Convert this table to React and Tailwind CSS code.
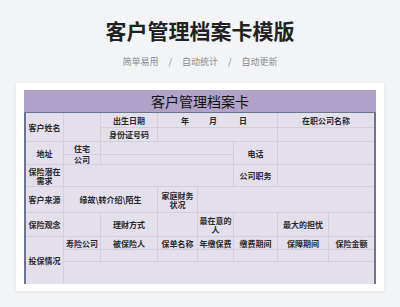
import React from 'react'

const cell = 'flex items-center justify-center text-center bg-[#e3e0ec] leading-[9px]'

export default function App() {
  return (
    <div className="min-h-screen bg-[#f3f4f6] font-['Noto_Sans_CJK_SC','Noto_Sans',sans-serif]">
      {/* Header */}
      <div className="pt-[17px] text-center text-[21px] font-bold leading-[26px] text-[#222]">客户管理档案卡模版</div>
      <div className="mt-[13px] flex justify-center gap-[10px] text-[9px] leading-[12px] text-[#8a8a8a]">
        <span>简单易用</span>
        <span>/</span>
        <span>自动统计</span>
        <span>/</span>
        <span>自动更新</span>
      </div>

      {/* Card */}
      <div className="mx-[16px] mt-[15px] bg-white px-[8px] py-[7px] shadow-[0_1px_4px_rgba(0,0,0,0.08)]">
        <div className="flex h-[22px] items-center justify-center bg-[#b0a2c9] text-[14px] text-[#111]">客户管理档案卡</div>
        <div className="grid grid-cols-[37px_36px_56px_39px_35px_43px_50px_45px] grid-rows-[14px_13px_12px_9px_21px_25px_23px_12px_11px_22px] gap-px border-t border-l-2 border-r-2 border-[#6b7590] bg-[#d2cedd] text-[8px] font-semibold text-[#2a2a2a]">
          {/* row 1-2 */}
          <div className={`${cell} col-start-1 row-start-1 row-span-2`}>客户姓名</div>
          <div className={`${cell} col-start-2 row-start-1 row-span-2`}></div>
          <div className={`${cell} col-start-3 row-start-1`}>出生日期</div>
          <div className={`${cell} col-start-4 col-span-3 row-start-1 !justify-start pl-[23px]`}>
            <span>年</span>
            <span className="ml-[20px]">月</span>
            <span className="ml-[22px]">日</span>
          </div>
          <div className={`${cell} col-start-7 col-span-2 row-start-1`}>在职公司名称</div>
          <div className={`${cell} col-start-3 row-start-2`}>身份证号码</div>
          <div className={`${cell} col-start-4 col-span-3 row-start-2`}></div>
          <div className={`${cell} col-start-7 col-span-2 row-start-2`}></div>

          {/* row 3-4 */}
          <div className={`${cell} col-start-1 row-start-3 row-span-2`}>地址</div>
          <div className={`${cell} col-start-2 row-start-3`}>住宅</div>
          <div className={`${cell} col-start-3 col-span-3 row-start-3`}></div>
          <div className={`${cell} col-start-6 row-start-3 row-span-2`}>电话</div>
          <div className={`${cell} col-start-7 col-span-2 row-start-3 row-span-2`}></div>
          <div className={`${cell} col-start-2 row-start-4`}>公司</div>
          <div className={`${cell} col-start-3 col-span-3 row-start-4`}></div>

          {/* row 5 */}
          <div className={`${cell} col-start-1 row-start-5 px-[2px]`}>保险潜在需求</div>
          <div className={`${cell} col-start-2 col-span-4 row-start-5`}></div>
          <div className={`${cell} col-start-6 row-start-5`}>公司职务</div>
          <div className={`${cell} col-start-7 col-span-2 row-start-5`}></div>

          {/* row 6 */}
          <div className={`${cell} col-start-1 row-start-6`}>客户来源</div>
          <div className={`${cell} col-start-2 col-span-2 row-start-6`}>缘故\转介绍\陌生</div>
          <div className={`${cell} col-start-4 row-start-6 px-[2px]`}>家庭财务状况</div>
          <div className={`${cell} col-start-5 col-span-4 row-start-6`}></div>

          {/* row 7 */}
          <div className={`${cell} col-start-1 row-start-7`}>保险观念</div>
          <div className={`${cell} col-start-2 row-start-7`}></div>
          <div className={`${cell} col-start-3 row-start-7`}>理财方式</div>
          <div className={`${cell} col-start-4 row-start-7`}></div>
          <div className={`${cell} col-start-5 row-start-7 px-[1px]`}>最在意的人</div>
          <div className={`${cell} col-start-6 row-start-7`}></div>
          <div className={`${cell} col-start-7 row-start-7`}>最大的担忧</div>
          <div className={`${cell} col-start-8 row-start-7`}></div>

          {/* row 8-10 */}
          <div className={`${cell} col-start-1 row-start-8 row-span-3`}>投保情况</div>
          <div className={`${cell} col-start-2 row-start-8`}>寿险公司</div>
          <div className={`${cell} col-start-3 row-start-8`}>被保险人</div>
          <div className={`${cell} col-start-4 row-start-8`}>保单名称</div>
          <div className={`${cell} col-start-5 row-start-8`}>年缴保费</div>
          <div className={`${cell} col-start-6 row-start-8`}>缴费期间</div>
          <div className={`${cell} col-start-7 row-start-8`}>保障期间</div>
          <div className={`${cell} col-start-8 row-start-8`}>保险金额</div>
          <div className={`${cell} col-start-2 row-start-9`}></div>
          <div className={`${cell} col-start-3 row-start-9`}></div>
          <div className={`${cell} col-start-4 row-start-9`}></div>
          <div className={`${cell} col-start-5 row-start-9`}></div>
          <div className={`${cell} col-start-6 row-start-9`}></div>
          <div className={`${cell} col-start-7 row-start-9`}></div>
          <div className={`${cell} col-start-8 row-start-9`}></div>
          <div className={`${cell} col-start-2 col-span-7 row-start-10`}></div>
        </div>
      </div>
    </div>
  )
}
